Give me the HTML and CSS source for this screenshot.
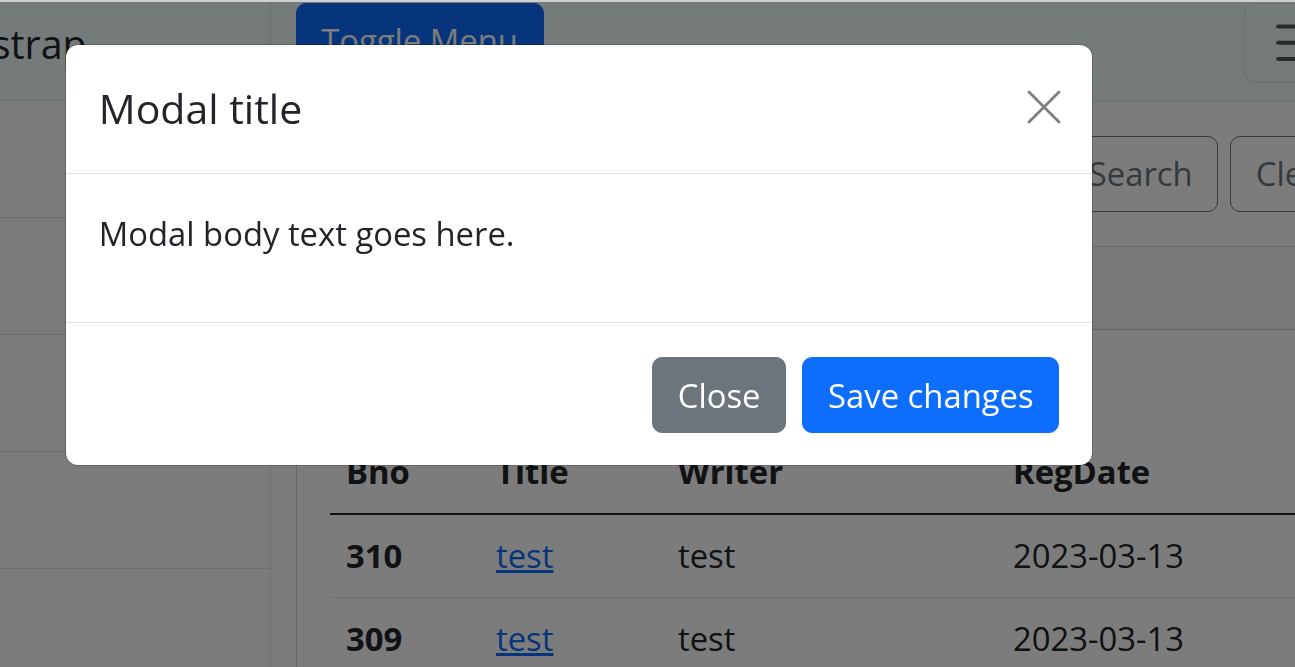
FILE: index.html
```html
<!DOCTYPE html>
<html lang="en">
<head>
<meta charset="utf-8">
<title>Board</title>
<link rel="stylesheet" href="styles.css">
</head>
<body>
<div class="page">
  <aside class="sidebar">
    <div class="sidebar-heading">Start Bootstrap</div>
    <div class="list-group">
      <a class="list-item" href="#">Dashboard</a>
      <a class="list-item" href="#">Shortcuts</a>
      <a class="list-item" href="#">Overview</a>
      <a class="list-item" href="#">Events</a>
      <a class="list-item" href="#">Profile</a>
    </div>
  </aside>
  <main class="main">
    <nav class="navbar">
      <button class="btn btn-primary" type="button">Toggle Menu</button>
      <button class="toggler" type="button" aria-label="Toggle navigation">
        <svg class="toggler-icon" viewBox="0 0 30 30" aria-hidden="true">
          <path d="M4 7h22M4 15h22M4 23h22" stroke="rgba(33,37,41,0.75)" stroke-width="2" stroke-linecap="round"/>
        </svg>
      </button>
    </nav>
    <div class="content">
      <form class="search">
        <input class="search-input" type="text" placeholder="Keyword">
        <button class="btn btn-outline" type="button">Search</button>
        <button class="btn btn-outline" type="button">Clear</button>
      </form>
      <div class="card">
        <div class="card-header">Board List</div>
        <div class="card-body">
          <h5 class="card-title">Board List Example</h5>
          <table class="table">
            <thead>
              <tr>
                <th class="c1">Bno</th>
                <th class="c2">Title</th>
                <th class="c3">Writer</th>
                <th class="c4">RegDate</th>
              </tr>
            </thead>
            <tbody>
              <tr>
                <th>310</th>
                <td><a href="#">test</a></td>
                <td>test</td>
                <td>2023-03-13</td>
              </tr>
              <tr>
                <th>309</th>
                <td><a href="#">test</a></td>
                <td>test</td>
                <td>2023-03-13</td>
              </tr>
            </tbody>
          </table>
        </div>
      </div>
    </div>
  </main>
</div>

<div class="backdrop"></div>

<div class="modal" role="dialog" aria-modal="true">
  <div class="modal-header">
    <h5 class="modal-title">Modal title</h5>
    <button class="btn-close" type="button" aria-label="Close">
      <svg viewBox="0 0 34 34" aria-hidden="true">
        <path d="M2 2L32 32M32 2L2 32" stroke="#000" stroke-width="2.8" stroke-linecap="round"/>
      </svg>
    </button>
  </div>
  <div class="modal-body">
    <p>Modal body text goes here.</p>
  </div>
  <div class="modal-footer">
    <button class="btn btn-secondary" type="button">Close</button>
    <button class="btn btn-primary" type="button">Save changes</button>
  </div>
</div>
</body>
</html>
```

FILE: styles.css
```css
* {
  box-sizing: border-box;
}

html, body {
  margin: 0;
  padding: 0;
  height: 100%;
  overflow: hidden;
}

body {
  font-family: "Open Sans", "Noto Sans", "Noto Sans CJK KR", sans-serif;
  font-size: 32.8px;
  line-height: 1.5;
  color: #212529;
  background: #fff;
  border-top: 2px solid #cfcfcf;
}

.page {
  display: flex;
  width: 1603px;
  margin-left: -222px;
  margin-top: -14px;
  min-height: 800px;
}

/* Sidebar */
.sidebar {
  width: 493px;
  flex: none;
  border-right: 1px solid #dee2e6;
  background: #f8f9fa;
}

.sidebar-heading {
  padding: 26.5px 41px 26.5px 29px;
  font-size: 39.4px;
  line-height: 1.5;
  border-bottom: 1px solid #dee2e6;
  background: #f0fbfb;
  white-space: nowrap;
}

.list-group {
  display: flex;
  flex-direction: column;
  background: #fcfcfd;
}

.list-item {
  display: block;
  padding: 33px;
  height: 117px;
  color: #636464;
  text-decoration: none;
  border-bottom: 1px solid #dee2e6;
}

/* Main */
.main {
  flex: 1;
  min-width: 0;
  display: flex;
  flex-direction: column;
}

.navbar {
  display: flex;
  justify-content: space-between;
  align-items: flex-start;
  height: 114px;
  padding: 15px 24.6px 0;
  background: #f0fbfb;
  border-bottom: 1px solid #dee2e6;
}

.btn {
  display: inline-block;
  font-family: inherit;
  font-size: 32.8px;
  line-height: 1.5;
  padding: 12.3px 24.6px;
  border: 1px solid transparent;
  border-radius: 10px;
  cursor: pointer;
  white-space: nowrap;
}

.btn-primary {
  background: #0d6efd;
  border-color: #0d6efd;
  color: #fff;
}

.btn-secondary {
  background: #6c757d;
  border-color: #6c757d;
  color: #fff;
}

.btn-outline {
  background: transparent;
  border-color: #6c757d;
  color: #6c757d;
}

.toggler {
  width: 112px;
  height: 80px;
  padding: 8.2px 24.6px;
  background: transparent;
  border: 1px solid rgba(0, 0, 0, 0.1);
  border-radius: 10px;
  display: flex;
  align-items: center;
}

.toggler-icon {
  width: 61.5px;
  height: 61.5px;
  display: block;
}

.content {
  padding: 0 24.6px;
}

.search {
  display: flex;
  gap: 12px;
  margin-top: 34px;
  margin-right: -4px;
}

.search-input {
  flex: 1;
  font-family: inherit;
  font-size: 32.8px;
  padding: 12.3px 24.6px;
  border: 1px solid #dee2e6;
  border-radius: 10px;
}

.card {
  margin-top: 34px;
  border: 1px solid rgba(0, 0, 0, 0.175);
  border-radius: 10px;
  overflow: hidden;
}

.card-header {
  padding: 16.4px 33px;
  background: rgba(0, 0, 0, 0.03);
  border-bottom: 1px solid rgba(0, 0, 0, 0.175);
}

.card-body {
  padding: 33px;
}

.card-title {
  margin: 0 0 19px;
  font-size: 41px;
  font-weight: 500;
  line-height: 1.2;
}

.table {
  width: 100%;
  border-collapse: collapse;
  table-layout: fixed;
}

.table th,
.table td {
  text-align: left;
  padding: 16.4px;
  line-height: 49px;
  border-bottom: 1px solid #dee2e6;
}

.table thead th {
  border-bottom: 2px solid #212529;
}

.table th {
  font-weight: 700;
}

.c1 { width: 150px; }
.c2 { width: 182px; }
.c3 { width: 335px; }

.table a {
  color: #0d6efd;
  text-decoration: underline;
}

/* Backdrop & modal (overlay) */
.backdrop {
  position: fixed;
  left: 0;
  right: 0;
  top: 2px;
  bottom: 0;
  background: rgba(0, 0, 0, 0.515);
}

.modal {
  position: fixed;
  left: 65px;
  top: 44px;
  width: 1028px;
  background: #fff;
  border: 1px solid rgba(0, 0, 0, 0.175);
  border-radius: 13px;
  background-clip: padding-box;
}

.modal-header {
  display: flex;
  align-items: center;
  justify-content: space-between;
  padding: 32.8px 32.8px 33.8px;
  border-bottom: 1px solid #dee2e6;
}

.modal-title {
  margin: 0;
  font-size: 41px;
  font-weight: 400;
  line-height: 1.5;
  color: #212529;
}

.btn-close {
  width: 50px;
  height: 50px;
  padding: 8px;
  margin-right: -10px;
  margin-top: -4px;
  background: transparent;
  border: 0;
  opacity: 0.5;
  display: flex;
  align-items: center;
  justify-content: center;
  cursor: pointer;
}

.btn-close svg {
  width: 34px;
  height: 34px;
  display: block;
}

.modal-body {
  padding: 35px 32.8px 30.6px;
}

.modal-body p {
  margin: 0 0 32.8px;
}

.modal-footer {
  display: flex;
  justify-content: flex-end;
  align-items: center;
  gap: 16.4px;
  padding: 34.8px 32.8px 31.8px;
  border-top: 1px solid #dee2e6;
}
```
